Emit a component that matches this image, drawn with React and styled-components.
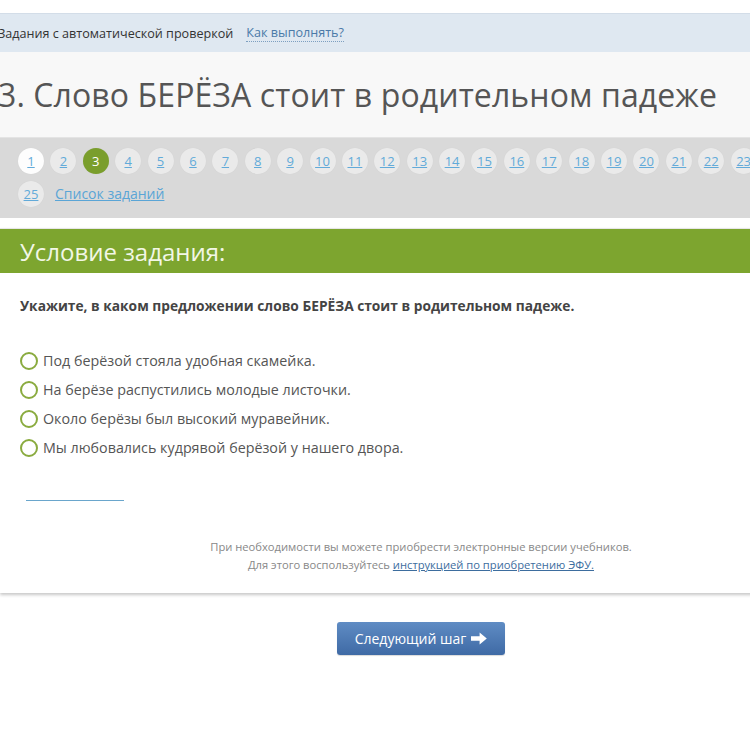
import React from "react";
import styled, { createGlobalStyle } from "styled-components";

const Global = createGlobalStyle`
  html, body { margin: 0; padding: 0; background: #fff; overflow: hidden; }
  body { font-family: "Open Sans", "Liberation Sans", sans-serif; }
`;

const Page = styled.div`
  width: 842px;
  padding-top: 13px;
  min-height: 751px;
  box-sizing: border-box;
`;

const TopBar = styled.div`
  height: 39px;
  background: #dfe8f1;
  border-top: 1px solid #d3dde8;
  box-sizing: border-box;
  display: flex;
  align-items: center;
  gap: 13px;
  margin-left: -2px;
  font-size: 12.6px;
  color: #333;
`;

const HowLink = styled.a`
  color: #4a7aa8;
  text-decoration: none;
  border-bottom: 1px dotted #7d9fc0;
  line-height: 16px;
`;

const TitleBox = styled.div`
  background: #f8f8f8;
  height: 86px;
  display: flex;
  align-items: center;
  margin-left: -2px;
  border-bottom: 1px solid #e4e4e4;
  box-sizing: border-box;
`;

const Title = styled.h1`
  margin: 0;
  font-weight: 400;
  font-size: 32px;
  color: #555;
  letter-spacing: 0.1px;
`;

const Pager = styled.div`
  background: #d9d9d9;
  height: 80px;
  box-sizing: border-box;
  padding: 10px 30px 0 18px;
  display: flex;
  flex-wrap: wrap;
  align-content: flex-start;
  column-gap: 6.4px;
  row-gap: 7px;
`;

const Num = styled.a`
  width: 26px;
  height: 26px;
  border-radius: 50%;
  display: flex;
  align-items: center;
  justify-content: center;
  font-size: 13px;
  background: ${(p) => (p.$active ? "#7a9e2c" : p.$done ? "#fdfdfd" : "#eaeaea")};
  color: ${(p) => (p.$active ? "#fff" : "#62aad9")};
  text-decoration: ${(p) => (p.$active ? "none" : "underline")};
  box-shadow: 0 0 1px rgba(0, 0, 0, 0.08);
`;

const ListLink = styled.a`
  margin-left: 4.6px;
  font-size: 14px;
  color: #5aa5d6;
  text-decoration: underline;
  line-height: 26px;
`;

const Card = styled.div`
  margin-top: 10px;
  border-top: 1px solid #e6e6e6;
  box-shadow: 0 2px 3px rgba(0, 0, 0, 0.22);
  background: #fff;
  padding-bottom: 19px;
`;

const CardHead = styled.div`
  background: #7da52f;
  height: 44px;
  display: flex;
  align-items: center;
  padding-left: 20px;
  font-size: 24px;
  color: #f2f7e6;
`;

const Body = styled.div`
  padding: 22px 20px 0 20px;
`;

const Question = styled.p`
  margin: 0 0 33px;
  font-weight: 700;
  font-size: 13.75px;
  color: #444;
  line-height: 22px;
`;

const Options = styled.div`
  display: flex;
  flex-direction: column;
  gap: 7px;
`;

const Option = styled.label`
  display: flex;
  align-items: center;
  gap: 5px;
  font-size: 14.3px;
  color: #555;
  line-height: 22px;
`;

const Radio = styled.span`
  width: 14px;
  height: 14px;
  border: 2px solid #8aab3f;
  border-radius: 50%;
  flex: none;
`;

const Divider = styled.div`
  width: 98px;
  height: 1px;
  background: #6aa6cc;
  margin: 41px 0 0 6px;
`;

const Note = styled.div`
  text-align: center;
  font-size: 11.2px;
  color: #888;
  line-height: 18px;
  margin-top: 37px;
`;

const NoteLink = styled.a`
  color: #3d6d9e;
  text-decoration: underline;
`;

const Actions = styled.div`
  display: flex;
  justify-content: center;
  padding-top: 29px;
`;

const NextButton = styled.button`
  width: 168px;
  height: 33px;
  border: none;
  border-radius: 3px;
  background: linear-gradient(#5f8cc4, #3f6aa5);
  color: #fff;
  font-family: "Open Sans", "Liberation Sans", sans-serif;
  font-size: 14px;
  display: flex;
  align-items: center;
  justify-content: center;
  gap: 5px;
  box-shadow: 0 1px 1px rgba(0, 0, 0, 0.15);
`;

const Arrow = () => (
  <svg width="16" height="13" viewBox="0 0 16 13" aria-hidden="true">
    <path d="M0 4.3h8.6V0.4L15.8 6.5 8.6 12.6V8.7H0z" fill="#fff" />
  </svg>
);

const options = [
  "Под берёзой стояла удобная скамейка.",
  "На берёзе распустились молодые листочки.",
  "Около берёзы был высокий муравейник.",
  "Мы любовались кудрявой берёзой у нашего двора.",
];

export default function App() {
  const nums = Array.from({ length: 25 }, (_, i) => i + 1);
  return (
    <>
      <Global />
      <Page>
        <TopBar>
          <span>Задания с автоматической проверкой</span>
          <HowLink>Как выполнять?</HowLink>
        </TopBar>
        <TitleBox>
          <Title>3. Слово БЕРЁЗА стоит в родительном падеже</Title>
        </TitleBox>
        <Pager>
          {nums.map((n) => (
            <Num key={n} $active={n === 3} $done={n === 1}>
              {n}
            </Num>
          ))}
          <ListLink>Список заданий</ListLink>
        </Pager>
        <Card>
          <CardHead>Условие задания:</CardHead>
          <Body>
            <Question>Укажите, в каком предложении слово БЕРЁЗА стоит в родительном падеже.</Question>
            <Options>
              {options.map((o) => (
                <Option key={o}>
                  <Radio />
                  {o}
                </Option>
              ))}
            </Options>
            <Divider />
            <Note>
              При необходимости вы можете приобрести электронные версии учебников.
              <br />
              Для этого воспользуйтесь <NoteLink>инструкцией по приобретению ЭФУ.</NoteLink>
            </Note>
          </Body>
        </Card>
        <Actions>
          <NextButton>
            Следующий шаг <Arrow />
          </NextButton>
        </Actions>
      </Page>
    </>
  );
}
